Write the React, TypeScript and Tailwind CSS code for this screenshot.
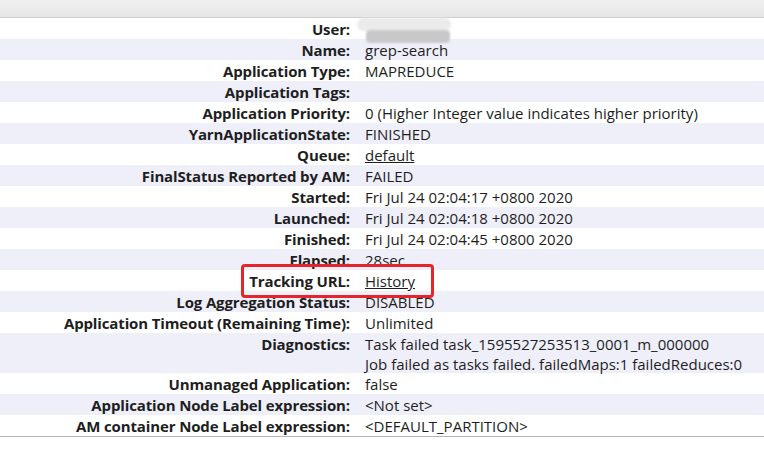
const rows: { label: string; value: React.ReactNode; tall?: boolean }[] = [
  { label: "User:", value: null },
  { label: "Name:", value: "grep-search" },
  { label: "Application Type:", value: "MAPREDUCE" },
  { label: "Application Tags:", value: "" },
  { label: "Application Priority:", value: "0 (Higher Integer value indicates higher priority)" },
  { label: "YarnApplicationState:", value: "FINISHED" },
  { label: "Queue:", value: <a className="underline">default</a> },
  { label: "FinalStatus Reported by AM:", value: "FAILED" },
  { label: "Started:", value: "Fri Jul 24 02:04:17 +0800 2020" },
  { label: "Launched:", value: "Fri Jul 24 02:04:18 +0800 2020" },
  { label: "Finished:", value: "Fri Jul 24 02:04:45 +0800 2020" },
  { label: "Elapsed:", value: "28sec" },
  { label: "Tracking URL:", value: <a className="underline">History</a> },
  { label: "Log Aggregation Status:", value: "DISABLED" },
  { label: "Application Timeout (Remaining Time):", value: "Unlimited" },
  {
    label: "Diagnostics:",
    value: (
      <>
        <div>Task failed task_1595527253513_0001_m_000000</div>
        <div>Job failed as tasks failed. failedMaps:1 failedReduces:0</div>
      </>
    ),
    tall: true,
  },
  { label: "Unmanaged Application:", value: "false" },
  { label: "Application Node Label expression:", value: "<Not set>" },
  { label: "AM container Node Label expression:", value: "<DEFAULT_PARTITION>" },
];

// blurred-out user name
function Redacted() {
  return (
    <div className="relative -ml-[8px] -mt-[1px] h-[25px] w-[94px]">
      <div className="absolute inset-x-0 top-0 h-[13px] rounded-[7px] bg-[#ebebeb] blur-[1px]" />
      <div className="absolute left-[9px] right-[1px] top-[12px] h-[13px] rounded-[4px] bg-[#c8c8cb] blur-[1px]" />
    </div>
  );
}

export default function App() {
  return (
    <div
      className="relative w-[764px] h-[451px] bg-white overflow-hidden text-[15px] text-[#1e1e1e]"
      style={{ fontFamily: '"Open Sans", "Noto Sans", sans-serif' }}
    >
      {/* top bar */}
      <div className="h-[18px] bg-gradient-to-b from-[#f0f0f0] to-[#e6e6e6] border-b border-[#cfcfcf]" />

      <div className="border-b border-[#b4b4b4]">
        {rows.map((r, i) => (
          <div
            key={r.label}
            className={`grid grid-cols-[350px_1fr] ${r.tall ? "h-[40px]" : "h-[21px]"} ${
              i % 2 === 1 ? "bg-[#efeffa]" : "bg-white"
            }`}
          >
            <div className="text-right font-bold leading-[20px] pt-[1px] tracking-[-0.13px] whitespace-nowrap">
              {r.label}
            </div>
            <div className="pl-[15px] leading-[20px] pt-[1px] whitespace-nowrap">
              {r.label === "User:" ? <Redacted /> : r.value}
            </div>
          </div>
        ))}
      </div>

      {/* highlight box */}
      <div className="absolute left-[241px] top-[264px] w-[193px] h-[34px] border-[3px] border-[#e5252a] rounded-[4px]" />
    </div>
  );
}
